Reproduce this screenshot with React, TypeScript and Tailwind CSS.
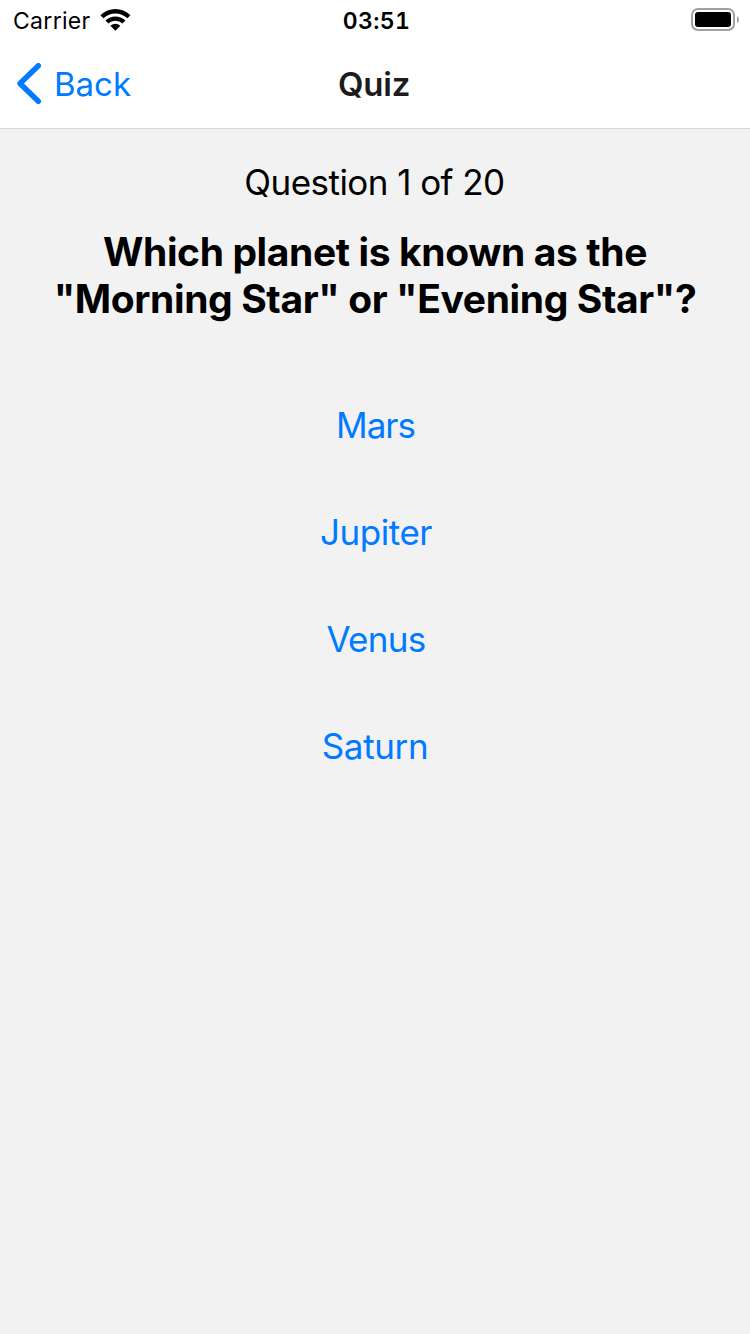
const answers = [
  { label: "Mars", style: "pl-[1px] tracking-[-1px]" },
  { label: "Jupiter", style: "pl-[2px] tracking-[-0.45px]" },
  { label: "Venus", style: "pl-[2px] tracking-[-0.7px]" },
  { label: "Saturn", style: "tracking-[-0.35px]" },
];

function StatusBar() {
  return (
    <div className="grid h-10 grid-cols-3 items-center pl-[13px] pr-[11px] text-[23px] text-black">
      <div className="flex items-center gap-[9px]">
        <span className="pt-[3px] tracking-[0.3px]">Carrier</span>
        <svg width="31" height="22" viewBox="0 0 31 22" fill="none">
          <path d="M0.4 6.2C8.9-2 21.9-2 30.4 6.2L27.4 9.3C20.6 2.9 10.2 2.9 3.4 9.3z" fill="black" />
          <path d="M5.4 11.5C11.2 6 19.6 6 25.4 11.5L22.3 14.6C18.3 10.8 12.5 10.8 8.5 14.6z" fill="black" />
          <path d="M15.4 21.7l-5-4.9q5-4.3 10 0z" fill="black" />
        </svg>
      </div>
      <span className="pt-[3px] pl-px text-center font-semibold tracking-[0.4px] tabular-nums">03:51</span>
      <svg className="justify-self-end" width="48" height="24" viewBox="0 0 48 24">
        <rect x="1" y="1" width="42" height="21" rx="6" fill="none" stroke="#a0a0a0" strokeWidth="2" />
        <rect x="4" y="4" width="36" height="15" rx="3" fill="black" />
        <path d="M46 8v7q2-1 2-3.5t-2-3.5" fill="#a0a0a0" />
      </svg>
    </div>
  );
}

function NavBar() {
  return (
    <header className="grid h-[88px] grid-cols-3 items-center px-4 text-[33px] leading-[42px]">
      <button className="flex items-center gap-3 text-[#007aff]">
        <svg width="26" height="42" viewBox="0 0 26 42" fill="none" stroke="currentColor" strokeWidth="5.4" strokeLinecap="round" strokeLinejoin="round">
          <path d="M22.3 2.7L4 20.5l18.3 17.8" />
        </svg>
        <span>Back</span>
      </button>
      <h1 className="pr-[2px] text-center font-semibold tracking-[-0.2px] text-[#1c1c1e]">Quiz</h1>
    </header>
  );
}

export default function App() {
  return (
    <div className="flex h-[1334px] w-[750px] flex-col bg-[#f2f2f2] font-['Inter',sans-serif]">
      <div className="h-[129px] border-b border-[#d8d8d8] bg-white">
        <StatusBar />
        <NavBar />
      </div>
      <main className="flex flex-col items-center text-center">
        <p className="mt-8 pr-px text-[35px] leading-[43px] tracking-[-0.55px] text-black">Question 1 of 20</p>
        <h2 className="mt-6 text-[39px] leading-[47px] font-bold tracking-[-0.38px] text-black">
          Which planet is known as the
          <br />
          "Morning Star" or "Evening Star"?
        </h2>
        <div className="mt-[82px] flex flex-col items-center gap-16">
          {answers.map((a) => (
            <button key={a.label} className={"text-[35px] leading-[43px] text-[#007aff] " + a.style}>
              {a.label}
            </button>
          ))}
        </div>
      </main>
    </div>
  );
}
